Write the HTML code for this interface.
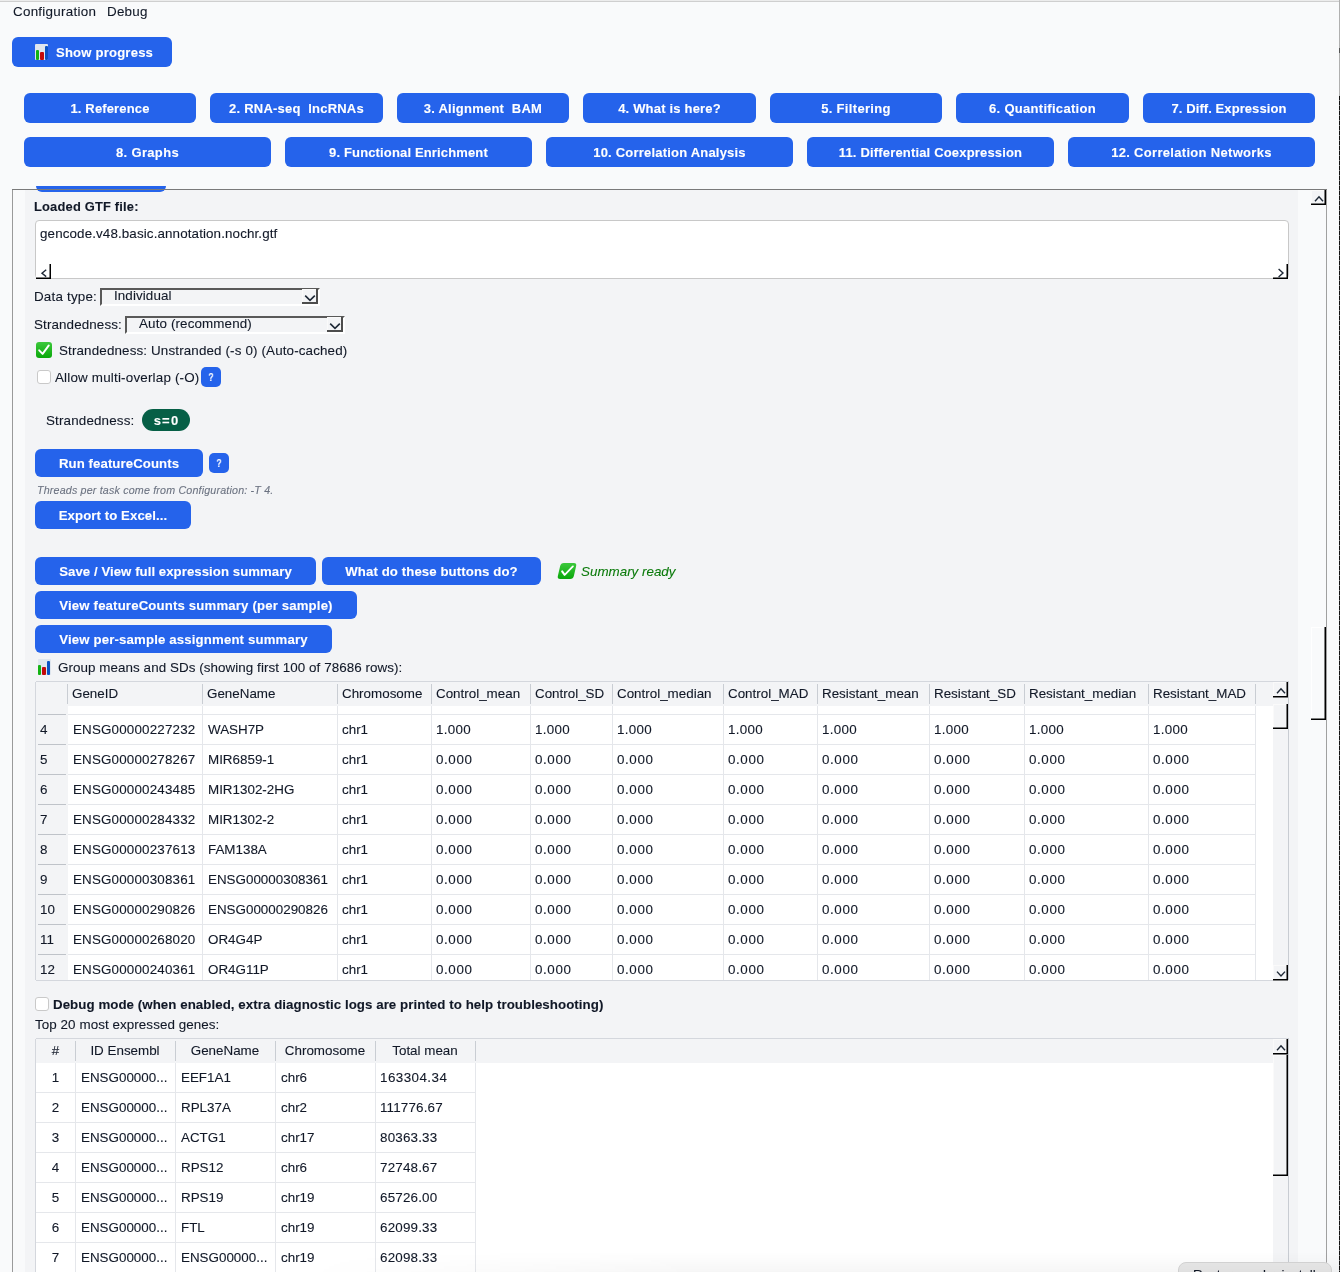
<!DOCTYPE html><html><head><meta charset="utf-8"><style>
html,body{margin:0;padding:0;}
body{width:1340px;height:1272px;overflow:hidden;position:relative;background:#f9fafb;font-family:"Liberation Sans",sans-serif;color:#111827;}
.a{position:absolute;}
.t{white-space:nowrap;-webkit-text-stroke:0.1px currentColor;will-change:transform;}
</style></head><body>

<div class="a" style="left:0px;top:0px;width:1340px;height:1px;background:#ececec;"></div>
<div class="a" style="left:0px;top:1px;width:1340px;height:1px;background:#cfcfcf;"></div>
<div class="a t" style="left:13.4px;top:4.22px;font-size:13.4px;line-height:16.08px;letter-spacing:0.269px;">Configuration</div>
<div class="a t" style="left:107.4px;top:4.22px;font-size:13.4px;line-height:16.08px;letter-spacing:0.220px;">Debug</div>
<div class="a" style="left:12px;top:37px;width:160px;height:30px;background:#2563eb;border-radius:6px;"></div>
<div class="a t" style="left:55.9px;top:45.10px;font-size:13.1px;line-height:15.72px;font-weight:700;color:#fff;letter-spacing:0.192px;">Show progress</div>
<div class="a" style="left:24px;top:93px;width:172px;height:30px;background:#2563eb;border-radius:6px;"></div>
<div class="a t" style="left:24px;top:100.60px;font-size:13px;line-height:15.6px;font-weight:700;color:#fff;width:172px;text-align:center;letter-spacing:0.142px;">1. Reference</div>
<div class="a" style="left:210px;top:93px;width:173px;height:30px;background:#2563eb;border-radius:6px;"></div>
<div class="a t" style="left:210px;top:100.60px;font-size:13px;line-height:15.6px;font-weight:700;color:#fff;width:173px;text-align:center;letter-spacing:0.211px;">2. RNA-seq&nbsp; lncRNAs</div>
<div class="a" style="left:397px;top:93px;width:172px;height:30px;background:#2563eb;border-radius:6px;"></div>
<div class="a t" style="left:397px;top:100.60px;font-size:13px;line-height:15.6px;font-weight:700;color:#fff;width:172px;text-align:center;letter-spacing:0.235px;">3. Alignment&nbsp; BAM</div>
<div class="a" style="left:583px;top:93px;width:173px;height:30px;background:#2563eb;border-radius:6px;"></div>
<div class="a t" style="left:583px;top:100.60px;font-size:13px;line-height:15.6px;font-weight:700;color:#fff;width:173px;text-align:center;letter-spacing:0.188px;">4. What is here?</div>
<div class="a" style="left:770px;top:93px;width:172px;height:30px;background:#2563eb;border-radius:6px;"></div>
<div class="a t" style="left:770px;top:100.60px;font-size:13px;line-height:15.6px;font-weight:700;color:#fff;width:172px;text-align:center;letter-spacing:0.333px;">5. Filtering</div>
<div class="a" style="left:956px;top:93px;width:173px;height:30px;background:#2563eb;border-radius:6px;"></div>
<div class="a t" style="left:956px;top:100.60px;font-size:13px;line-height:15.6px;font-weight:700;color:#fff;width:173px;text-align:center;letter-spacing:0.294px;">6. Quantification</div>
<div class="a" style="left:1143px;top:93px;width:172px;height:30px;background:#2563eb;border-radius:6px;"></div>
<div class="a t" style="left:1143px;top:100.60px;font-size:13px;line-height:15.6px;font-weight:700;color:#fff;width:172px;text-align:center;letter-spacing:0.079px;">7. Diff. Expression</div>
<div class="a" style="left:24px;top:137px;width:247px;height:30px;background:#2563eb;border-radius:6px;"></div>
<div class="a t" style="left:24px;top:144.60px;font-size:13px;line-height:15.6px;font-weight:700;color:#fff;width:247px;text-align:center;letter-spacing:0.333px;">8. Graphs</div>
<div class="a" style="left:285px;top:137px;width:247px;height:30px;background:#2563eb;border-radius:6px;"></div>
<div class="a t" style="left:285px;top:144.60px;font-size:13px;line-height:15.6px;font-weight:700;color:#fff;width:247px;text-align:center;letter-spacing:0.146px;">9. Functional Enrichment</div>
<div class="a" style="left:546px;top:137px;width:247px;height:30px;background:#2563eb;border-radius:6px;"></div>
<div class="a t" style="left:546px;top:144.60px;font-size:13px;line-height:15.6px;font-weight:700;color:#fff;width:247px;text-align:center;letter-spacing:0.208px;">10. Correlation Analysis</div>
<div class="a" style="left:807px;top:137px;width:247px;height:30px;background:#2563eb;border-radius:6px;"></div>
<div class="a t" style="left:807px;top:144.60px;font-size:13px;line-height:15.6px;font-weight:700;color:#fff;width:247px;text-align:center;letter-spacing:0.172px;">11. Differential Coexpression</div>
<div class="a" style="left:1068px;top:137px;width:247px;height:30px;background:#2563eb;border-radius:6px;"></div>
<div class="a t" style="left:1068px;top:144.60px;font-size:13px;line-height:15.6px;font-weight:700;color:#fff;width:247px;text-align:center;letter-spacing:0.312px;">12. Correlation Networks</div>
<div class="a" style="left:12px;top:189px;width:1315px;height:1083px;background:#f9fafb;border-top:1px solid #7a7a7a;border-left:1px solid #9a9a9a;border-right:1px solid #a0a0a0;box-sizing:border-box;"></div>
<div class="a" style="left:25px;top:190px;width:1273px;height:1082px;background:#f3f4f6;"></div>
<div class="a" style="left:36px;top:186px;width:130px;height:6px;background:#2563eb;border-radius:0 0 6px 6px;"></div>
<div class="a" style="left:12px;top:189px;width:1315px;height:1px;background:#7a7a7a;"></div>
<div class="a t" style="left:34.2px;top:198.79px;font-size:12.9px;line-height:15.48px;font-weight:700;letter-spacing:0.188px;">Loaded GTF file:</div>
<div class="a" style="left:35px;top:220px;width:1254px;height:59px;background:#fff;border:1px solid #c8c8c8;border-radius:4px;box-sizing:border-box;"></div>
<div class="a t" style="left:40px;top:225.92px;font-size:13.4px;line-height:16.08px;letter-spacing:0.116px;">gencode.v48.basic.annotation.nochr.gtf</div>
<div class="a" style="left:36px;top:264px;width:15px;height:15px;box-sizing:border-box;background:#fff;border-top:1px solid #fff;border-left:1px solid #fff;"></div>
<svg class="a" style="left:0;top:0" width="1340" height="1272"><path d="M50.25 264 L50.25 278.25 L36 278.25" fill="none" stroke="#000" stroke-width="1.5"/></svg>
<svg class="a" style="left:0;top:0" width="1340" height="1272"><path d="M46.2 269.8 L42.0 273.2 L46.2 276.59999999999997" fill="none" stroke="#1f2937" stroke-width="1.4"/></svg>
<div class="a" style="left:1273px;top:264px;width:15px;height:15px;box-sizing:border-box;background:#fff;border-top:1px solid #fff;border-left:1px solid #fff;"></div>
<svg class="a" style="left:0;top:0" width="1340" height="1272"><path d="M1287.25 264 L1287.25 278.25 L1273 278.25" fill="none" stroke="#000" stroke-width="1.5"/></svg>
<svg class="a" style="left:0;top:0" width="1340" height="1272"><path d="M1278.6 269.1 L1283.0 273 L1278.6 276.9" fill="none" stroke="#1f2937" stroke-width="1.4"/></svg>
<div class="a t" style="left:34.2px;top:288.92px;font-size:13.4px;line-height:16.08px;letter-spacing:0.200px;">Data type:</div>
<div class="a" style="left:100px;top:288px;width:220px;height:18px;box-sizing:border-box;border-top:2px solid #595959;border-left:2px solid #595959;border-right:2px solid #fff;border-bottom:2px solid #fff;"></div>
<div class="a t" style="left:113.7px;top:288.22px;font-size:13.4px;line-height:16.08px;letter-spacing:0.100px;">Individual</div>
<div class="a" style="left:302px;top:289px;width:16px;height:15px;box-sizing:border-box;background:#f3f4f6;border-top:1px solid #fafafa;border-left:1px solid #fafafa;"></div>
<svg class="a" style="left:0;top:0" width="1340" height="1272"><path d="M317.0 289 L317.0 303.0 L302 303.0" fill="none" stroke="#4d4d4d" stroke-width="2"/></svg>
<svg class="a" style="left:0;top:0" width="1340" height="1272"><path d="M305.2 295.6 L310 300.4 L314.8 295.6" fill="none" stroke="#1f2937" stroke-width="1.6"/></svg>
<div class="a t" style="left:34.2px;top:316.62px;font-size:13.4px;line-height:16.08px;letter-spacing:0.115px;">Strandedness:</div>
<div class="a" style="left:125px;top:316px;width:220px;height:18px;box-sizing:border-box;border-top:2px solid #595959;border-left:2px solid #595959;border-right:2px solid #fff;border-bottom:2px solid #fff;"></div>
<div class="a t" style="left:138.7px;top:316.22px;font-size:13.4px;line-height:16.08px;letter-spacing:0.125px;">Auto (recommend)</div>
<div class="a" style="left:327px;top:317px;width:16px;height:15px;box-sizing:border-box;background:#f3f4f6;border-top:1px solid #fafafa;border-left:1px solid #fafafa;"></div>
<svg class="a" style="left:0;top:0" width="1340" height="1272"><path d="M342.0 317 L342.0 331.0 L327 331.0" fill="none" stroke="#4d4d4d" stroke-width="2"/></svg>
<svg class="a" style="left:0;top:0" width="1340" height="1272"><path d="M330.2 323.6 L335 328.4 L339.8 323.6" fill="none" stroke="#1f2937" stroke-width="1.6"/></svg>
<div class="a" style="left:36px;top:342px;width:16px;height:16px;border-radius:3px;background:linear-gradient(#3cc83c,#0aa80a);"></div>
<svg class="a" style="left:36px;top:342px" width="16" height="16" viewBox="0 0 16 16"><path d="M3.2 8.3 L6.6 11.9 L12.8 3.4" fill="none" stroke="#fff" stroke-width="1.9" stroke-linecap="round" stroke-linejoin="round"/></svg>
<div class="a t" style="left:58.6px;top:343.32px;font-size:13.4px;line-height:16.08px;letter-spacing:0.140px;">Strandedness: Unstranded (-s 0) (Auto-cached)</div>
<div class="a" style="left:37px;top:370px;width:13.5px;height:13.5px;background:#fff;border:1px solid #c9c9c9;border-radius:3px;box-sizing:border-box;"></div>
<div class="a t" style="left:55.2px;top:370.22px;font-size:13.4px;line-height:16.08px;letter-spacing:0.192px;">Allow multi-overlap (-O)</div>
<div class="a" style="left:201px;top:367px;width:20px;height:20px;background:#2563eb;border-radius:5px;"></div>
<div class="a t" style="left:201px;top:371.06px;font-size:10.5px;line-height:12.6px;font-weight:700;color:#fff;width:20px;text-align:center;transform:scaleX(.78);">?</div>
<div class="a t" style="left:46px;top:412.82px;font-size:13.4px;line-height:16.08px;letter-spacing:0.154px;">Strandedness:</div>
<div class="a" style="left:142px;top:409px;width:48px;height:22px;background:#065f46;border-radius:11px;"></div>
<div class="a t" style="left:142px;top:413.00px;font-size:13px;line-height:15.6px;font-weight:700;color:#fff;width:48px;text-align:center;letter-spacing:1.2px;text-indent:1px;">s=0</div>
<div class="a" style="left:35px;top:449px;width:168px;height:28px;background:#2563eb;border-radius:6px;"></div>
<div class="a t" style="left:35px;top:456.01px;font-size:13.2px;line-height:15.84px;font-weight:700;color:#fff;width:168px;text-align:center;letter-spacing:0.088px;">Run featureCounts</div>
<div class="a" style="left:209px;top:453px;width:20px;height:20px;background:#2563eb;border-radius:5px;"></div>
<div class="a t" style="left:209px;top:457.06px;font-size:10.5px;line-height:12.6px;font-weight:700;color:#fff;width:20px;text-align:center;transform:scaleX(.78);">?</div>
<div class="a t" style="left:36.8px;top:483.67px;font-size:10.7px;line-height:12.84px;color:#6b7280;font-style:italic;letter-spacing:0.177px;">Threads per task come from Configuration: -T 4.</div>
<div class="a" style="left:35px;top:501px;width:156px;height:28px;background:#2563eb;border-radius:6px;"></div>
<div class="a t" style="left:35px;top:508.01px;font-size:13.2px;line-height:15.84px;font-weight:700;color:#fff;width:156px;text-align:center;letter-spacing:0.089px;">Export to Excel...</div>
<div class="a" style="left:35px;top:557px;width:281px;height:28px;background:#2563eb;border-radius:6px;"></div>
<div class="a t" style="left:35px;top:564.01px;font-size:13.2px;line-height:15.84px;font-weight:700;color:#fff;width:281px;text-align:center;letter-spacing:0.055px;">Save / View full expression summary</div>
<div class="a" style="left:322px;top:557px;width:219px;height:28px;background:#2563eb;border-radius:6px;"></div>
<div class="a t" style="left:322px;top:564.01px;font-size:13.2px;line-height:15.84px;font-weight:700;color:#fff;width:219px;text-align:center;letter-spacing:0.099px;">What do these buttons do?</div>
<div class="a" style="left:557px;top:563px;width:20px;height:16px;transform:skewX(-13deg);transform-origin:50% 50%;">
<div class="a" style="left:1.5px;top:0px;width:16px;height:16px;border-radius:3px;background:linear-gradient(#3cc83c,#0aa80a);"></div>
<svg class="a" style="left:1.5px;top:0px" width="16" height="16" viewBox="0 0 16 16"><path d="M3.2 8.3 L6.6 11.9 L12.8 3.4" fill="none" stroke="#fff" stroke-width="1.9" stroke-linecap="round" stroke-linejoin="round"/></svg>
</div>
<div class="a t" style="left:580.7px;top:564.22px;font-size:13.4px;line-height:16.08px;color:#0b7a0b;font-style:italic;">Summary ready</div>
<div class="a" style="left:35px;top:591px;width:322px;height:28px;background:#2563eb;border-radius:6px;"></div>
<div class="a t" style="left:35px;top:598.01px;font-size:13.2px;line-height:15.84px;font-weight:700;color:#fff;width:322px;text-align:center;letter-spacing:0.156px;">View featureCounts summary (per sample)</div>
<div class="a" style="left:35px;top:625px;width:297px;height:28px;background:#2563eb;border-radius:6px;"></div>
<div class="a t" style="left:35px;top:632.01px;font-size:13.2px;line-height:15.84px;font-weight:700;color:#fff;width:297px;text-align:center;letter-spacing:0.161px;">View per-sample assignment summary</div>
<div class="a" style="left:37.5px;top:659px;width:13px;height:16px;background:#dfe6ee;border-radius:1px;"></div>
<div class="a" style="left:38.0px;top:664.5px;width:3.3px;height:10.3px;background:#12b312;border-radius:1px;"></div>
<div class="a" style="left:42.1px;top:667px;width:3.8px;height:7.8px;background:#c20a0a;border-radius:1px;"></div>
<div class="a" style="left:46.8px;top:661px;width:3.3px;height:13.8px;background:#0a52c4;border-radius:1px;"></div>
<div class="a t" style="left:58.3px;top:660.22px;font-size:13.4px;line-height:16.08px;letter-spacing:0.064px;">Group means and SDs (showing first 100 of 78686 rows):</div>
<div class="a" style="left:35.3px;top:44px;width:13px;height:16px;background:#dfe6ee;border-radius:1px;"></div>
<div class="a" style="left:35.8px;top:49.5px;width:3.3px;height:10.3px;background:#12b312;border-radius:1px;"></div>
<div class="a" style="left:39.9px;top:52px;width:3.8px;height:7.8px;background:#c20a0a;border-radius:1px;"></div>
<div class="a" style="left:44.599999999999994px;top:46px;width:3.3px;height:13.8px;background:#0a52c4;border-radius:1px;"></div>
<div class="a" style="left:1311px;top:190px;width:15px;height:15px;box-sizing:border-box;background:#f3f4f6;border-top:1px solid #fafafa;border-left:1px solid #fafafa;"></div>
<svg class="a" style="left:0;top:0" width="1340" height="1272"><path d="M1325.25 190 L1325.25 204.25 L1311 204.25" fill="none" stroke="#000" stroke-width="1.5"/></svg>
<svg class="a" style="left:0;top:0" width="1340" height="1272"><path d="M1315 201.2 L1319 196.8 L1323 201.2" fill="none" stroke="#1f2937" stroke-width="1.4"/></svg>
<div class="a" style="left:1311px;top:627px;width:15px;height:93px;box-sizing:border-box;background:#f9fafb;border-top:1px solid #ffffff;border-left:1px solid #ffffff;"></div>
<svg class="a" style="left:0;top:0" width="1340" height="1272"><path d="M1325.25 627 L1325.25 719.25 L1311 719.25" fill="none" stroke="#000" stroke-width="1.5"/></svg>
<div class="a" style="left:36px;top:681px;width:1252px;height:1px;background:#d4d7dd;"></div>
<div class="a" style="left:35px;top:682px;width:1px;height:298px;background:#d4d7dd;"></div>
<div class="a" style="left:1288px;top:681px;width:1px;height:299px;background:#c8ccd2;"></div>
<div class="a" style="left:36px;top:682px;width:1237px;height:24px;background:#f3f4f6;"></div>
<div class="a" style="left:36px;top:706px;width:32px;height:274px;background:#f3f4f6;"></div>
<div class="a" style="left:68px;top:706px;width:1205px;height:274px;background:#ffffff;"></div>
<div class="a" style="left:67px;top:684px;width:1px;height:20px;background:#c9cdd3;"></div>
<div class="a" style="left:202px;top:684px;width:1px;height:20px;background:#c9cdd3;"></div>
<div class="a" style="left:337px;top:684px;width:1px;height:20px;background:#c9cdd3;"></div>
<div class="a" style="left:431px;top:684px;width:1px;height:20px;background:#c9cdd3;"></div>
<div class="a" style="left:530px;top:684px;width:1px;height:20px;background:#c9cdd3;"></div>
<div class="a" style="left:612px;top:684px;width:1px;height:20px;background:#c9cdd3;"></div>
<div class="a" style="left:723px;top:684px;width:1px;height:20px;background:#c9cdd3;"></div>
<div class="a" style="left:817px;top:684px;width:1px;height:20px;background:#c9cdd3;"></div>
<div class="a" style="left:929px;top:684px;width:1px;height:20px;background:#c9cdd3;"></div>
<div class="a" style="left:1024px;top:684px;width:1px;height:20px;background:#c9cdd3;"></div>
<div class="a" style="left:1148px;top:684px;width:1px;height:20px;background:#c9cdd3;"></div>
<div class="a" style="left:1255px;top:684px;width:1px;height:20px;background:#c9cdd3;"></div>
<div class="a" style="left:202px;top:706px;width:1px;height:274px;background:#e5e7eb;"></div>
<div class="a" style="left:337px;top:706px;width:1px;height:274px;background:#e5e7eb;"></div>
<div class="a" style="left:431px;top:706px;width:1px;height:274px;background:#e5e7eb;"></div>
<div class="a" style="left:530px;top:706px;width:1px;height:274px;background:#e5e7eb;"></div>
<div class="a" style="left:612px;top:706px;width:1px;height:274px;background:#e5e7eb;"></div>
<div class="a" style="left:723px;top:706px;width:1px;height:274px;background:#e5e7eb;"></div>
<div class="a" style="left:817px;top:706px;width:1px;height:274px;background:#e5e7eb;"></div>
<div class="a" style="left:929px;top:706px;width:1px;height:274px;background:#e5e7eb;"></div>
<div class="a" style="left:1024px;top:706px;width:1px;height:274px;background:#e5e7eb;"></div>
<div class="a" style="left:1148px;top:706px;width:1px;height:274px;background:#e5e7eb;"></div>
<div class="a" style="left:1255px;top:706px;width:1px;height:274px;background:#e5e7eb;"></div>
<div class="a t" style="left:72.2px;top:685.92px;font-size:13.4px;line-height:16.08px;">GeneID</div>
<div class="a t" style="left:207.2px;top:685.92px;font-size:13.4px;line-height:16.08px;">GeneName</div>
<div class="a t" style="left:342.2px;top:685.92px;font-size:13.4px;line-height:16.08px;">Chromosome</div>
<div class="a t" style="left:436.2px;top:685.92px;font-size:13.4px;line-height:16.08px;">Control_mean</div>
<div class="a t" style="left:535.2px;top:685.92px;font-size:13.4px;line-height:16.08px;">Control_SD</div>
<div class="a t" style="left:617.2px;top:685.92px;font-size:13.4px;line-height:16.08px;">Control_median</div>
<div class="a t" style="left:728.2px;top:685.92px;font-size:13.4px;line-height:16.08px;">Control_MAD</div>
<div class="a t" style="left:822.2px;top:685.92px;font-size:13.4px;line-height:16.08px;">Resistant_mean</div>
<div class="a t" style="left:934.2px;top:685.92px;font-size:13.4px;line-height:16.08px;">Resistant_SD</div>
<div class="a t" style="left:1029.2px;top:685.92px;font-size:13.4px;line-height:16.08px;">Resistant_median</div>
<div class="a t" style="left:1153.2px;top:685.92px;font-size:13.4px;line-height:16.08px;">Resistant_MAD</div>
<div class="a" style="left:38px;top:714px;width:28px;height:1px;background:#bfc3c9;"></div>
<div class="a" style="left:68px;top:714px;width:1187px;height:1px;background:#e5e7eb;"></div>
<div class="a" style="left:38px;top:744px;width:28px;height:1px;background:#bfc3c9;"></div>
<div class="a" style="left:68px;top:744px;width:1187px;height:1px;background:#e5e7eb;"></div>
<div class="a" style="left:38px;top:774px;width:28px;height:1px;background:#bfc3c9;"></div>
<div class="a" style="left:68px;top:774px;width:1187px;height:1px;background:#e5e7eb;"></div>
<div class="a" style="left:38px;top:804px;width:28px;height:1px;background:#bfc3c9;"></div>
<div class="a" style="left:68px;top:804px;width:1187px;height:1px;background:#e5e7eb;"></div>
<div class="a" style="left:38px;top:834px;width:28px;height:1px;background:#bfc3c9;"></div>
<div class="a" style="left:68px;top:834px;width:1187px;height:1px;background:#e5e7eb;"></div>
<div class="a" style="left:38px;top:864px;width:28px;height:1px;background:#bfc3c9;"></div>
<div class="a" style="left:68px;top:864px;width:1187px;height:1px;background:#e5e7eb;"></div>
<div class="a" style="left:38px;top:894px;width:28px;height:1px;background:#bfc3c9;"></div>
<div class="a" style="left:68px;top:894px;width:1187px;height:1px;background:#e5e7eb;"></div>
<div class="a" style="left:38px;top:924px;width:28px;height:1px;background:#bfc3c9;"></div>
<div class="a" style="left:68px;top:924px;width:1187px;height:1px;background:#e5e7eb;"></div>
<div class="a" style="left:38px;top:954px;width:28px;height:1px;background:#bfc3c9;"></div>
<div class="a" style="left:68px;top:954px;width:1187px;height:1px;background:#e5e7eb;"></div>
<div class="a t" style="left:40px;top:722.22px;font-size:13.4px;line-height:16.08px;">4</div>
<div class="a t" style="left:72.5px;top:722.22px;font-size:13.4px;line-height:16.08px;letter-spacing:0.167px;">ENSG00000227232</div>
<div class="a t" style="left:207.5px;top:722.22px;font-size:13.4px;line-height:16.08px;">WASH7P</div>
<div class="a t" style="left:342px;top:722.22px;font-size:13.4px;line-height:16.08px;">chr1</div>
<div class="a t" style="left:436px;top:722.22px;font-size:13.4px;line-height:16.08px;letter-spacing:0.300px;">1.000</div>
<div class="a t" style="left:535px;top:722.22px;font-size:13.4px;line-height:16.08px;letter-spacing:0.300px;">1.000</div>
<div class="a t" style="left:617px;top:722.22px;font-size:13.4px;line-height:16.08px;letter-spacing:0.300px;">1.000</div>
<div class="a t" style="left:728px;top:722.22px;font-size:13.4px;line-height:16.08px;letter-spacing:0.300px;">1.000</div>
<div class="a t" style="left:822px;top:722.22px;font-size:13.4px;line-height:16.08px;letter-spacing:0.300px;">1.000</div>
<div class="a t" style="left:934px;top:722.22px;font-size:13.4px;line-height:16.08px;letter-spacing:0.300px;">1.000</div>
<div class="a t" style="left:1029px;top:722.22px;font-size:13.4px;line-height:16.08px;letter-spacing:0.300px;">1.000</div>
<div class="a t" style="left:1153px;top:722.22px;font-size:13.4px;line-height:16.08px;letter-spacing:0.300px;">1.000</div>
<div class="a t" style="left:40px;top:752.22px;font-size:13.4px;line-height:16.08px;">5</div>
<div class="a t" style="left:72.5px;top:752.22px;font-size:13.4px;line-height:16.08px;letter-spacing:0.167px;">ENSG00000278267</div>
<div class="a t" style="left:207.5px;top:752.22px;font-size:13.4px;line-height:16.08px;">MIR6859-1</div>
<div class="a t" style="left:342px;top:752.22px;font-size:13.4px;line-height:16.08px;">chr1</div>
<div class="a t" style="left:436px;top:752.22px;font-size:13.4px;line-height:16.08px;letter-spacing:0.600px;">0.000</div>
<div class="a t" style="left:535px;top:752.22px;font-size:13.4px;line-height:16.08px;letter-spacing:0.600px;">0.000</div>
<div class="a t" style="left:617px;top:752.22px;font-size:13.4px;line-height:16.08px;letter-spacing:0.600px;">0.000</div>
<div class="a t" style="left:728px;top:752.22px;font-size:13.4px;line-height:16.08px;letter-spacing:0.600px;">0.000</div>
<div class="a t" style="left:822px;top:752.22px;font-size:13.4px;line-height:16.08px;letter-spacing:0.600px;">0.000</div>
<div class="a t" style="left:934px;top:752.22px;font-size:13.4px;line-height:16.08px;letter-spacing:0.600px;">0.000</div>
<div class="a t" style="left:1029px;top:752.22px;font-size:13.4px;line-height:16.08px;letter-spacing:0.600px;">0.000</div>
<div class="a t" style="left:1153px;top:752.22px;font-size:13.4px;line-height:16.08px;letter-spacing:0.600px;">0.000</div>
<div class="a t" style="left:40px;top:782.22px;font-size:13.4px;line-height:16.08px;">6</div>
<div class="a t" style="left:72.5px;top:782.22px;font-size:13.4px;line-height:16.08px;letter-spacing:0.167px;">ENSG00000243485</div>
<div class="a t" style="left:207.5px;top:782.22px;font-size:13.4px;line-height:16.08px;">MIR1302-2HG</div>
<div class="a t" style="left:342px;top:782.22px;font-size:13.4px;line-height:16.08px;">chr1</div>
<div class="a t" style="left:436px;top:782.22px;font-size:13.4px;line-height:16.08px;letter-spacing:0.600px;">0.000</div>
<div class="a t" style="left:535px;top:782.22px;font-size:13.4px;line-height:16.08px;letter-spacing:0.600px;">0.000</div>
<div class="a t" style="left:617px;top:782.22px;font-size:13.4px;line-height:16.08px;letter-spacing:0.600px;">0.000</div>
<div class="a t" style="left:728px;top:782.22px;font-size:13.4px;line-height:16.08px;letter-spacing:0.600px;">0.000</div>
<div class="a t" style="left:822px;top:782.22px;font-size:13.4px;line-height:16.08px;letter-spacing:0.600px;">0.000</div>
<div class="a t" style="left:934px;top:782.22px;font-size:13.4px;line-height:16.08px;letter-spacing:0.600px;">0.000</div>
<div class="a t" style="left:1029px;top:782.22px;font-size:13.4px;line-height:16.08px;letter-spacing:0.600px;">0.000</div>
<div class="a t" style="left:1153px;top:782.22px;font-size:13.4px;line-height:16.08px;letter-spacing:0.600px;">0.000</div>
<div class="a t" style="left:40px;top:812.22px;font-size:13.4px;line-height:16.08px;">7</div>
<div class="a t" style="left:72.5px;top:812.22px;font-size:13.4px;line-height:16.08px;letter-spacing:0.167px;">ENSG00000284332</div>
<div class="a t" style="left:207.5px;top:812.22px;font-size:13.4px;line-height:16.08px;">MIR1302-2</div>
<div class="a t" style="left:342px;top:812.22px;font-size:13.4px;line-height:16.08px;">chr1</div>
<div class="a t" style="left:436px;top:812.22px;font-size:13.4px;line-height:16.08px;letter-spacing:0.600px;">0.000</div>
<div class="a t" style="left:535px;top:812.22px;font-size:13.4px;line-height:16.08px;letter-spacing:0.600px;">0.000</div>
<div class="a t" style="left:617px;top:812.22px;font-size:13.4px;line-height:16.08px;letter-spacing:0.600px;">0.000</div>
<div class="a t" style="left:728px;top:812.22px;font-size:13.4px;line-height:16.08px;letter-spacing:0.600px;">0.000</div>
<div class="a t" style="left:822px;top:812.22px;font-size:13.4px;line-height:16.08px;letter-spacing:0.600px;">0.000</div>
<div class="a t" style="left:934px;top:812.22px;font-size:13.4px;line-height:16.08px;letter-spacing:0.600px;">0.000</div>
<div class="a t" style="left:1029px;top:812.22px;font-size:13.4px;line-height:16.08px;letter-spacing:0.600px;">0.000</div>
<div class="a t" style="left:1153px;top:812.22px;font-size:13.4px;line-height:16.08px;letter-spacing:0.600px;">0.000</div>
<div class="a t" style="left:40px;top:842.22px;font-size:13.4px;line-height:16.08px;">8</div>
<div class="a t" style="left:72.5px;top:842.22px;font-size:13.4px;line-height:16.08px;letter-spacing:0.167px;">ENSG00000237613</div>
<div class="a t" style="left:207.5px;top:842.22px;font-size:13.4px;line-height:16.08px;">FAM138A</div>
<div class="a t" style="left:342px;top:842.22px;font-size:13.4px;line-height:16.08px;">chr1</div>
<div class="a t" style="left:436px;top:842.22px;font-size:13.4px;line-height:16.08px;letter-spacing:0.600px;">0.000</div>
<div class="a t" style="left:535px;top:842.22px;font-size:13.4px;line-height:16.08px;letter-spacing:0.600px;">0.000</div>
<div class="a t" style="left:617px;top:842.22px;font-size:13.4px;line-height:16.08px;letter-spacing:0.600px;">0.000</div>
<div class="a t" style="left:728px;top:842.22px;font-size:13.4px;line-height:16.08px;letter-spacing:0.600px;">0.000</div>
<div class="a t" style="left:822px;top:842.22px;font-size:13.4px;line-height:16.08px;letter-spacing:0.600px;">0.000</div>
<div class="a t" style="left:934px;top:842.22px;font-size:13.4px;line-height:16.08px;letter-spacing:0.600px;">0.000</div>
<div class="a t" style="left:1029px;top:842.22px;font-size:13.4px;line-height:16.08px;letter-spacing:0.600px;">0.000</div>
<div class="a t" style="left:1153px;top:842.22px;font-size:13.4px;line-height:16.08px;letter-spacing:0.600px;">0.000</div>
<div class="a t" style="left:40px;top:872.22px;font-size:13.4px;line-height:16.08px;">9</div>
<div class="a t" style="left:72.5px;top:872.22px;font-size:13.4px;line-height:16.08px;letter-spacing:0.167px;">ENSG00000308361</div>
<div class="a t" style="left:207.5px;top:872.22px;font-size:13.4px;line-height:16.08px;">ENSG00000308361</div>
<div class="a t" style="left:342px;top:872.22px;font-size:13.4px;line-height:16.08px;">chr1</div>
<div class="a t" style="left:436px;top:872.22px;font-size:13.4px;line-height:16.08px;letter-spacing:0.600px;">0.000</div>
<div class="a t" style="left:535px;top:872.22px;font-size:13.4px;line-height:16.08px;letter-spacing:0.600px;">0.000</div>
<div class="a t" style="left:617px;top:872.22px;font-size:13.4px;line-height:16.08px;letter-spacing:0.600px;">0.000</div>
<div class="a t" style="left:728px;top:872.22px;font-size:13.4px;line-height:16.08px;letter-spacing:0.600px;">0.000</div>
<div class="a t" style="left:822px;top:872.22px;font-size:13.4px;line-height:16.08px;letter-spacing:0.600px;">0.000</div>
<div class="a t" style="left:934px;top:872.22px;font-size:13.4px;line-height:16.08px;letter-spacing:0.600px;">0.000</div>
<div class="a t" style="left:1029px;top:872.22px;font-size:13.4px;line-height:16.08px;letter-spacing:0.600px;">0.000</div>
<div class="a t" style="left:1153px;top:872.22px;font-size:13.4px;line-height:16.08px;letter-spacing:0.600px;">0.000</div>
<div class="a t" style="left:40px;top:902.22px;font-size:13.4px;line-height:16.08px;">10</div>
<div class="a t" style="left:72.5px;top:902.22px;font-size:13.4px;line-height:16.08px;letter-spacing:0.167px;">ENSG00000290826</div>
<div class="a t" style="left:207.5px;top:902.22px;font-size:13.4px;line-height:16.08px;">ENSG00000290826</div>
<div class="a t" style="left:342px;top:902.22px;font-size:13.4px;line-height:16.08px;">chr1</div>
<div class="a t" style="left:436px;top:902.22px;font-size:13.4px;line-height:16.08px;letter-spacing:0.600px;">0.000</div>
<div class="a t" style="left:535px;top:902.22px;font-size:13.4px;line-height:16.08px;letter-spacing:0.600px;">0.000</div>
<div class="a t" style="left:617px;top:902.22px;font-size:13.4px;line-height:16.08px;letter-spacing:0.600px;">0.000</div>
<div class="a t" style="left:728px;top:902.22px;font-size:13.4px;line-height:16.08px;letter-spacing:0.600px;">0.000</div>
<div class="a t" style="left:822px;top:902.22px;font-size:13.4px;line-height:16.08px;letter-spacing:0.600px;">0.000</div>
<div class="a t" style="left:934px;top:902.22px;font-size:13.4px;line-height:16.08px;letter-spacing:0.600px;">0.000</div>
<div class="a t" style="left:1029px;top:902.22px;font-size:13.4px;line-height:16.08px;letter-spacing:0.600px;">0.000</div>
<div class="a t" style="left:1153px;top:902.22px;font-size:13.4px;line-height:16.08px;letter-spacing:0.600px;">0.000</div>
<div class="a t" style="left:40px;top:932.22px;font-size:13.4px;line-height:16.08px;">11</div>
<div class="a t" style="left:72.5px;top:932.22px;font-size:13.4px;line-height:16.08px;letter-spacing:0.167px;">ENSG00000268020</div>
<div class="a t" style="left:207.5px;top:932.22px;font-size:13.4px;line-height:16.08px;">OR4G4P</div>
<div class="a t" style="left:342px;top:932.22px;font-size:13.4px;line-height:16.08px;">chr1</div>
<div class="a t" style="left:436px;top:932.22px;font-size:13.4px;line-height:16.08px;letter-spacing:0.600px;">0.000</div>
<div class="a t" style="left:535px;top:932.22px;font-size:13.4px;line-height:16.08px;letter-spacing:0.600px;">0.000</div>
<div class="a t" style="left:617px;top:932.22px;font-size:13.4px;line-height:16.08px;letter-spacing:0.600px;">0.000</div>
<div class="a t" style="left:728px;top:932.22px;font-size:13.4px;line-height:16.08px;letter-spacing:0.600px;">0.000</div>
<div class="a t" style="left:822px;top:932.22px;font-size:13.4px;line-height:16.08px;letter-spacing:0.600px;">0.000</div>
<div class="a t" style="left:934px;top:932.22px;font-size:13.4px;line-height:16.08px;letter-spacing:0.600px;">0.000</div>
<div class="a t" style="left:1029px;top:932.22px;font-size:13.4px;line-height:16.08px;letter-spacing:0.600px;">0.000</div>
<div class="a t" style="left:1153px;top:932.22px;font-size:13.4px;line-height:16.08px;letter-spacing:0.600px;">0.000</div>
<div class="a t" style="left:40px;top:962.22px;font-size:13.4px;line-height:16.08px;">12</div>
<div class="a t" style="left:72.5px;top:962.22px;font-size:13.4px;line-height:16.08px;letter-spacing:0.167px;">ENSG00000240361</div>
<div class="a t" style="left:207.5px;top:962.22px;font-size:13.4px;line-height:16.08px;">OR4G11P</div>
<div class="a t" style="left:342px;top:962.22px;font-size:13.4px;line-height:16.08px;">chr1</div>
<div class="a t" style="left:436px;top:962.22px;font-size:13.4px;line-height:16.08px;letter-spacing:0.600px;">0.000</div>
<div class="a t" style="left:535px;top:962.22px;font-size:13.4px;line-height:16.08px;letter-spacing:0.600px;">0.000</div>
<div class="a t" style="left:617px;top:962.22px;font-size:13.4px;line-height:16.08px;letter-spacing:0.600px;">0.000</div>
<div class="a t" style="left:728px;top:962.22px;font-size:13.4px;line-height:16.08px;letter-spacing:0.600px;">0.000</div>
<div class="a t" style="left:822px;top:962.22px;font-size:13.4px;line-height:16.08px;letter-spacing:0.600px;">0.000</div>
<div class="a t" style="left:934px;top:962.22px;font-size:13.4px;line-height:16.08px;letter-spacing:0.600px;">0.000</div>
<div class="a t" style="left:1029px;top:962.22px;font-size:13.4px;line-height:16.08px;letter-spacing:0.600px;">0.000</div>
<div class="a t" style="left:1153px;top:962.22px;font-size:13.4px;line-height:16.08px;letter-spacing:0.600px;">0.000</div>
<div class="a" style="left:36px;top:980px;width:1237px;height:1px;background:#d4d7dd;"></div>
<div class="a" style="left:1273px;top:682px;width:15px;height:298px;background:#f3f4f6;"></div>
<div class="a" style="left:1273px;top:682px;width:15px;height:15.5px;box-sizing:border-box;background:#f3f4f6;border-top:1px solid #fafafa;border-left:1px solid #fafafa;"></div>
<svg class="a" style="left:0;top:0" width="1340" height="1272"><path d="M1287.25 682 L1287.25 696.75 L1273 696.75" fill="none" stroke="#000" stroke-width="1.5"/></svg>
<svg class="a" style="left:0;top:0" width="1340" height="1272"><path d="M1277 693.2 L1281 688.8 L1285 693.2" fill="none" stroke="#1f2937" stroke-width="1.4"/></svg>
<div class="a" style="left:1273px;top:704px;width:15px;height:25px;box-sizing:border-box;background:#f3f4f6;border-top:1px solid #fafafa;border-left:1px solid #fafafa;"></div>
<svg class="a" style="left:0;top:0" width="1340" height="1272"><path d="M1287.25 704 L1287.25 728.25 L1273 728.25" fill="none" stroke="#000" stroke-width="1.5"/></svg>
<div class="a" style="left:1273px;top:965px;width:15px;height:15.5px;box-sizing:border-box;background:#f3f4f6;border-top:1px solid #fafafa;border-left:1px solid #fafafa;"></div>
<svg class="a" style="left:0;top:0" width="1340" height="1272"><path d="M1287.25 965 L1287.25 979.75 L1273 979.75" fill="none" stroke="#000" stroke-width="1.5"/></svg>
<svg class="a" style="left:0;top:0" width="1340" height="1272"><path d="M1277 971.5999999999999 L1281 976.0 L1285 971.5999999999999" fill="none" stroke="#1f2937" stroke-width="1.4"/></svg>
<div class="a" style="left:35.4px;top:997px;width:13.5px;height:13.5px;background:#fff;border:1px solid #c9c9c9;border-radius:3px;box-sizing:border-box;"></div>
<div class="a t" style="left:53.4px;top:996.71px;font-size:13.3px;line-height:15.96px;font-weight:700;letter-spacing:0.053px;">Debug mode (when enabled, extra diagnostic logs are printed to help troubleshooting)</div>
<div class="a t" style="left:35.2px;top:1016.92px;font-size:13.4px;line-height:16.08px;letter-spacing:0.071px;">Top 20 most expressed genes:</div>
<div class="a" style="left:36px;top:1038px;width:1252px;height:1px;background:#d4d7dd;"></div>
<div class="a" style="left:35px;top:1039px;width:1px;height:233px;background:#d4d7dd;"></div>
<div class="a" style="left:1288px;top:1038px;width:1px;height:234px;background:#c8ccd2;"></div>
<div class="a" style="left:36px;top:1039px;width:1237px;height:24px;background:#f3f4f6;"></div>
<div class="a" style="left:36px;top:1063px;width:1237px;height:209px;background:#ffffff;"></div>
<div class="a" style="left:75px;top:1041px;width:1px;height:20px;background:#c9cdd3;"></div>
<div class="a" style="left:75px;top:1063px;width:1px;height:209px;background:#e5e7eb;"></div>
<div class="a" style="left:175px;top:1041px;width:1px;height:20px;background:#c9cdd3;"></div>
<div class="a" style="left:175px;top:1063px;width:1px;height:209px;background:#e5e7eb;"></div>
<div class="a" style="left:275px;top:1041px;width:1px;height:20px;background:#c9cdd3;"></div>
<div class="a" style="left:275px;top:1063px;width:1px;height:209px;background:#e5e7eb;"></div>
<div class="a" style="left:375px;top:1041px;width:1px;height:20px;background:#c9cdd3;"></div>
<div class="a" style="left:375px;top:1063px;width:1px;height:209px;background:#e5e7eb;"></div>
<div class="a" style="left:475px;top:1041px;width:1px;height:20px;background:#c9cdd3;"></div>
<div class="a" style="left:475px;top:1063px;width:1px;height:209px;background:#e5e7eb;"></div>
<div class="a t" style="left:36px;top:1042.82px;font-size:13.4px;line-height:16.08px;width:39px;text-align:center;">#</div>
<div class="a t" style="left:75px;top:1042.82px;font-size:13.4px;line-height:16.08px;width:100px;text-align:center;">ID Ensembl</div>
<div class="a t" style="left:175px;top:1042.82px;font-size:13.4px;line-height:16.08px;width:100px;text-align:center;">GeneName</div>
<div class="a t" style="left:275px;top:1042.82px;font-size:13.4px;line-height:16.08px;width:100px;text-align:center;">Chromosome</div>
<div class="a t" style="left:375px;top:1042.82px;font-size:13.4px;line-height:16.08px;width:100px;text-align:center;">Total mean</div>
<div class="a" style="left:36px;top:1092px;width:439px;height:1px;background:#e5e7eb;"></div>
<div class="a t" style="left:36px;top:1069.52px;font-size:13.4px;line-height:16.08px;width:39px;text-align:center;">1</div>
<div class="a t" style="left:81.3px;top:1069.52px;font-size:13.4px;line-height:16.08px;">ENSG00000...</div>
<div class="a t" style="left:181px;top:1069.52px;font-size:13.4px;line-height:16.08px;">EEF1A1</div>
<div class="a t" style="left:280.9px;top:1069.52px;font-size:13.4px;line-height:16.08px;">chr6</div>
<div class="a t" style="left:379.9px;top:1069.52px;font-size:13.4px;line-height:16.08px;letter-spacing:0.444px;">163304.34</div>
<div class="a" style="left:36px;top:1122px;width:439px;height:1px;background:#e5e7eb;"></div>
<div class="a t" style="left:36px;top:1099.52px;font-size:13.4px;line-height:16.08px;width:39px;text-align:center;">2</div>
<div class="a t" style="left:81.3px;top:1099.52px;font-size:13.4px;line-height:16.08px;">ENSG00000...</div>
<div class="a t" style="left:181px;top:1099.52px;font-size:13.4px;line-height:16.08px;">RPL37A</div>
<div class="a t" style="left:280.9px;top:1099.52px;font-size:13.4px;line-height:16.08px;">chr2</div>
<div class="a t" style="left:379.9px;top:1099.52px;font-size:13.4px;line-height:16.08px;letter-spacing:0.167px;">111776.67</div>
<div class="a" style="left:36px;top:1152px;width:439px;height:1px;background:#e5e7eb;"></div>
<div class="a t" style="left:36px;top:1129.52px;font-size:13.4px;line-height:16.08px;width:39px;text-align:center;">3</div>
<div class="a t" style="left:81.3px;top:1129.52px;font-size:13.4px;line-height:16.08px;">ENSG00000...</div>
<div class="a t" style="left:181px;top:1129.52px;font-size:13.4px;line-height:16.08px;">ACTG1</div>
<div class="a t" style="left:280.9px;top:1129.52px;font-size:13.4px;line-height:16.08px;">chr17</div>
<div class="a t" style="left:379.9px;top:1129.52px;font-size:13.4px;line-height:16.08px;letter-spacing:0.188px;">80363.33</div>
<div class="a" style="left:36px;top:1182px;width:439px;height:1px;background:#e5e7eb;"></div>
<div class="a t" style="left:36px;top:1159.52px;font-size:13.4px;line-height:16.08px;width:39px;text-align:center;">4</div>
<div class="a t" style="left:81.3px;top:1159.52px;font-size:13.4px;line-height:16.08px;">ENSG00000...</div>
<div class="a t" style="left:181px;top:1159.52px;font-size:13.4px;line-height:16.08px;">RPS12</div>
<div class="a t" style="left:280.9px;top:1159.52px;font-size:13.4px;line-height:16.08px;">chr6</div>
<div class="a t" style="left:379.9px;top:1159.52px;font-size:13.4px;line-height:16.08px;letter-spacing:0.188px;">72748.67</div>
<div class="a" style="left:36px;top:1212px;width:439px;height:1px;background:#e5e7eb;"></div>
<div class="a t" style="left:36px;top:1189.52px;font-size:13.4px;line-height:16.08px;width:39px;text-align:center;">5</div>
<div class="a t" style="left:81.3px;top:1189.52px;font-size:13.4px;line-height:16.08px;">ENSG00000...</div>
<div class="a t" style="left:181px;top:1189.52px;font-size:13.4px;line-height:16.08px;">RPS19</div>
<div class="a t" style="left:280.9px;top:1189.52px;font-size:13.4px;line-height:16.08px;">chr19</div>
<div class="a t" style="left:379.9px;top:1189.52px;font-size:13.4px;line-height:16.08px;letter-spacing:0.188px;">65726.00</div>
<div class="a" style="left:36px;top:1242px;width:439px;height:1px;background:#e5e7eb;"></div>
<div class="a t" style="left:36px;top:1219.52px;font-size:13.4px;line-height:16.08px;width:39px;text-align:center;">6</div>
<div class="a t" style="left:81.3px;top:1219.52px;font-size:13.4px;line-height:16.08px;">ENSG00000...</div>
<div class="a t" style="left:181px;top:1219.52px;font-size:13.4px;line-height:16.08px;">FTL</div>
<div class="a t" style="left:280.9px;top:1219.52px;font-size:13.4px;line-height:16.08px;">chr19</div>
<div class="a t" style="left:379.9px;top:1219.52px;font-size:13.4px;line-height:16.08px;letter-spacing:0.188px;">62099.33</div>
<div class="a" style="left:36px;top:1272px;width:439px;height:1px;background:#e5e7eb;"></div>
<div class="a t" style="left:36px;top:1249.52px;font-size:13.4px;line-height:16.08px;width:39px;text-align:center;">7</div>
<div class="a t" style="left:81.3px;top:1249.52px;font-size:13.4px;line-height:16.08px;">ENSG00000...</div>
<div class="a t" style="left:181px;top:1249.52px;font-size:13.4px;line-height:16.08px;">ENSG00000...</div>
<div class="a t" style="left:280.9px;top:1249.52px;font-size:13.4px;line-height:16.08px;">chr19</div>
<div class="a t" style="left:379.9px;top:1249.52px;font-size:13.4px;line-height:16.08px;letter-spacing:0.188px;">62098.33</div>
<div class="a" style="left:1273px;top:1039px;width:15px;height:233px;background:#f3f4f6;"></div>
<div class="a" style="left:1273px;top:1039px;width:15px;height:15.5px;box-sizing:border-box;background:#f3f4f6;border-top:1px solid #fafafa;border-left:1px solid #fafafa;"></div>
<svg class="a" style="left:0;top:0" width="1340" height="1272"><path d="M1287.25 1039 L1287.25 1053.75 L1273 1053.75" fill="none" stroke="#000" stroke-width="1.5"/></svg>
<svg class="a" style="left:0;top:0" width="1340" height="1272"><path d="M1277 1050.2 L1281 1045.8 L1285 1050.2" fill="none" stroke="#1f2937" stroke-width="1.4"/></svg>
<div class="a" style="left:1273px;top:1055px;width:15px;height:121px;box-sizing:border-box;background:#f3f4f6;border-top:1px solid #fafafa;border-left:1px solid #fafafa;"></div>
<svg class="a" style="left:0;top:0" width="1340" height="1272"><path d="M1287.25 1055 L1287.25 1175.25 L1273 1175.25" fill="none" stroke="#000" stroke-width="1.5"/></svg>
<div class="a" style="left:1177.5px;top:1262px;width:154px;height:30px;background:#e9e9e9;border:1px solid #d6d6d6;border-radius:8px;box-sizing:border-box;"></div>
<div class="a t" style="left:1193px;top:1267.42px;font-size:13.4px;line-height:16.08px;">Restore and reinstall</div>
<div class="a" style="left:300px;top:1252px;width:1040px;height:20px;background:linear-gradient(rgba(0,0,0,0),rgba(0,0,0,.035));-webkit-mask-image:linear-gradient(to right,transparent,#000 400px);"></div>
<div class="a" style="left:1339px;top:0px;width:1px;height:96px;background:#b0b0b0;"></div>
<div class="a" style="left:1339px;top:48px;width:1px;height:5px;background:#555;"></div>
<div class="a" style="left:1339px;top:96px;width:1px;height:1176px;background:repeating-linear-gradient(#111 0 4px,#777 4px 5px);"></div>
</body></html>
